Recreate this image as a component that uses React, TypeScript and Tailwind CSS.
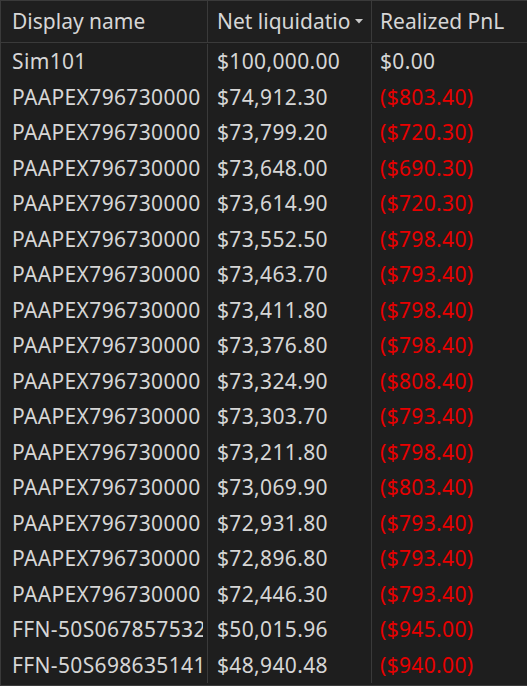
import React from 'react'

interface Account {
  name: string
  netLiq: string
  pnl: string
}

const accounts: Account[] = [
  { name: 'Sim101', netLiq: '$100,000.00', pnl: '$0.00' },
  { name: 'PAAPEX796730000', netLiq: '$74,912.30', pnl: '($803.40)' },
  { name: 'PAAPEX796730000', netLiq: '$73,799.20', pnl: '($720.30)' },
  { name: 'PAAPEX796730000', netLiq: '$73,648.00', pnl: '($690.30)' },
  { name: 'PAAPEX796730000', netLiq: '$73,614.90', pnl: '($720.30)' },
  { name: 'PAAPEX796730000', netLiq: '$73,552.50', pnl: '($798.40)' },
  { name: 'PAAPEX796730000', netLiq: '$73,463.70', pnl: '($793.40)' },
  { name: 'PAAPEX796730000', netLiq: '$73,411.80', pnl: '($798.40)' },
  { name: 'PAAPEX796730000', netLiq: '$73,376.80', pnl: '($798.40)' },
  { name: 'PAAPEX796730000', netLiq: '$73,324.90', pnl: '($808.40)' },
  { name: 'PAAPEX796730000', netLiq: '$73,303.70', pnl: '($793.40)' },
  { name: 'PAAPEX796730000', netLiq: '$73,211.80', pnl: '($798.40)' },
  { name: 'PAAPEX796730000', netLiq: '$73,069.90', pnl: '($803.40)' },
  { name: 'PAAPEX796730000', netLiq: '$72,931.80', pnl: '($793.40)' },
  { name: 'PAAPEX796730000', netLiq: '$72,896.80', pnl: '($793.40)' },
  { name: 'PAAPEX796730000', netLiq: '$72,446.30', pnl: '($793.40)' },
  { name: 'FFN-50S067857532', netLiq: '$50,015.96', pnl: '($945.00)' },
  { name: 'FFN-50S698635141', netLiq: '$48,940.48', pnl: '($940.00)' },
]

export default function App() {
  return (
    <div
      className="w-[527px] h-[686px] overflow-hidden bg-[#1e1e1e] text-[#d6d6d6] text-[21px]"
      style={{ fontFamily: '"Noto Sans", "Open Sans", sans-serif' }}
    >
      <div className="border-l border-t border-b border-[#3a3a3a] h-full flex flex-col">
        {/* header */}
        <div className="grid grid-cols-[207px_164px_1fr] h-[42px] border-b border-[#3a3a3a] bg-[#1f1f1f]">
          <div className="flex items-center pl-[11px] border-r border-[#3a3a3a] whitespace-nowrap overflow-hidden">
            Display name
          </div>
          <div className="flex items-center pl-[9px] pr-[8px] border-r border-[#3a3a3a]">
            <span className="flex-1 whitespace-nowrap overflow-hidden">Net liquidation</span>
            <svg width="8" height="5" viewBox="0 0 8 5" className="ml-[4px] shrink-0">
              <path d="M0 0 H8 L4 4.5 Z" fill="#c8c8c8" />
            </svg>
          </div>
          <div className="flex items-center pl-[8px] whitespace-nowrap overflow-hidden">
            Realized PnL
          </div>
        </div>

        {/* rows */}
        <div className="flex-1 grid grid-cols-[207px_164px_1fr] auto-rows-[35.5px] pt-[1px] tracking-[0.35px]">
          {accounts.map((a, i) => (
            <React.Fragment key={i}>
              <div className="flex items-center pl-[11px] pr-[4px] border-r border-[#3a3a3a]">
                <div className="whitespace-nowrap overflow-hidden">{a.name}</div>
              </div>
              <div className="flex items-center pl-[9px] border-r border-[#3a3a3a] whitespace-nowrap overflow-hidden">
                {a.netLiq}
              </div>
              <div
                className={
                  'flex items-center pl-[8px] whitespace-nowrap overflow-hidden ' +
                  (a.pnl.startsWith('(') ? 'text-[#e80000]' : '')
                }
              >
                {a.pnl}
              </div>
            </React.Fragment>
          ))}
        </div>
      </div>
    </div>
  )
}
